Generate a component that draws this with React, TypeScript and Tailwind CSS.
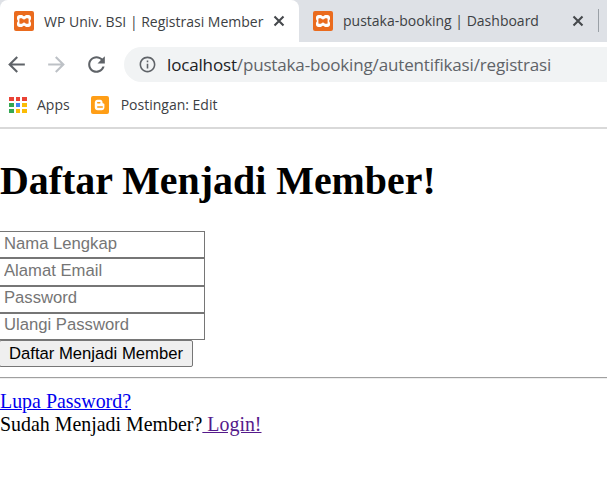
const serif = "font-['Liberation_Serif',serif]";
const sans = "font-['Liberation_Sans',Arial,sans-serif]";
const ui = "font-['Open_Sans','Noto_Sans',sans-serif]";

const fields = ['Nama Lengkap', 'Alamat Email', 'Password', 'Ulangi Password'];
const appColors = ['#ea4335', '#ea4335', '#ea4335', '#34a853', '#4285f4', '#fbbc05', '#34a853', '#fbbc05', '#fbbc05'];

function Xampp() {
  return (
    <svg width="20" height="20" viewBox="0 0 20 20" className="shrink-0">
      <rect width="20" height="20" rx="2" fill="#ea6b1e" />
      <path
        fillRule="evenodd"
        fill="#fff"
        d="M5.500 4h2.300c.9 0 1.200 1.200 2.200 1.200S11.300 4 12.200 4h2.300C16 4 17 5 17 6.500v1.200c0 1.100-.9 1.400-.9 2.300s.9 1.200.9 2.300v1.200c0 1.500-1 2.500-2.500 2.500h-2.300c-.9 0-1.200-1.200-2.200-1.200s-1.300 1.200-2.200 1.200H5.500C4 16 3 15 3 13.500v-1.200c0-1.100.9-1.400.9-2.300S3 8.800 3 7.700V6.500C3 5 4 4 5.500 4zM6.300 7.200c-.6 0-.9.300-.9.900v3.800c0 .6.300.9.900.9h1.400c.8 0 1-1.300 2.300-1.300s1.500 1.300 2.300 1.300h1.400c.6 0 .9-.3.900-.9V8.100c0-.6-.3-.9-.9-.9h-1.400c-.8 0-1 1.300-2.300 1.300S8.500 7.200 7.700 7.200z"
      />
    </svg>
  );
}

function CloseIcon() {
  return (
    <svg width="12" height="12" viewBox="0 0 12 12" className="shrink-0">
      <path d="M1.500 1.500l9 9M10.500 1.500l-9 9" stroke="#45484c" strokeWidth="2.100" fill="none" />
    </svg>
  );
}

function ArrowIcon({ flip, color }: { flip?: boolean; color: string }) {
  return (
    <svg width="25" height="25" viewBox="0 0 24 24" fill={color} className={flip ? 'shrink-0 -scale-x-100' : 'shrink-0'}>
      <path d="M20 11H7.830l5.590-5.590L12 4l-8 8 8 8 1.410-1.410L7.830 13H20v-2z" />
    </svg>
  );
}

function BloggerIcon() {
  return (
    <svg width="18" height="18" viewBox="0 0 18 18" className="shrink-0">
      <rect width="18" height="18" rx="2" fill="#ff9e16" />
      <path d="M6.500 3.800h2.700c1.300 0 2.300 1 2.300 2.300v.7c0 .5.400.7.900.7.700 0 1 .400 1 1v2.900c0 1.600-1.100 2.800-2.700 2.800H6.500c-1.500 0-2.700-1.200-2.700-2.700V6.500c0-1.500 1.200-2.700 2.700-2.700z" fill="#fff" />
      <rect x="6" y="6" width="3.500" height="1.500" rx=".7" fill="#ff9e16" />
      <rect x="6" y="10.300" width="6" height="1.500" rx=".7" fill="#ff9e16" />
    </svg>
  );
}

export default function App() {
  return (
    <div className="w-[607px] h-[499px] overflow-hidden bg-white">
      {/* Tabs */}
      <div className={`h-[42px] bg-[#dee1e6] flex ${ui}`}>
        <div className="w-[299px] h-[42px] bg-white rounded-t-[8px] flex items-center pl-[14px] pr-[14px]">
          <Xampp />
          <span className="ml-[10px] text-[14px] text-[#3c4043] whitespace-nowrap">WP Univ. BSI | Registrasi Member</span>
          <div className="ml-auto"><CloseIcon /></div>
        </div>
        <div className="flex-1 flex items-center pl-[14px] pb-[1px]">
          <Xampp />
          <span className="ml-[10px] text-[14px] text-[#3c4043] whitespace-nowrap">pustaka-booking | Dashboard</span>
          <div className="ml-auto"><CloseIcon /></div>
          <div className="ml-[14px] mr-[8px] w-px h-[23px] bg-[#9aa0a6]" />
        </div>
      </div>
      {/* Toolbar */}
      <div className="h-[42px] flex items-start pt-[5px]">
        <div className="w-[124px] h-[35px] flex items-center pl-[4px] gap-[15px]">
          <ArrowIcon color="#5f6368" />
          <ArrowIcon flip color="#bdc1c6" />
          <svg width="25" height="25" viewBox="0 0 24 24" fill="#5f6368" className="shrink-0">
            <path d="M17.650 6.350C16.200 4.900 14.210 4 12 4c-4.420 0-7.990 3.580-7.990 8s3.570 8 7.990 8c3.730 0 6.840-2.550 7.730-6h-2.080c-.82 2.330-3.040 4-5.650 4-3.310 0-6-2.690-6-6s2.690-6 6-6c1.660 0 3.140.69 4.220 1.780L13 11h7V4l-2.350 2.350z" />
          </svg>
        </div>
        <div className={`flex-1 h-[35px] bg-[#f1f3f4] rounded-l-full flex items-center pl-[14px] ${ui}`}>
          <svg width="19" height="19" viewBox="0 0 24 24" fill="#5f6368" className="shrink-0">
            <path d="M11 7h2v2h-2zm0 4h2v6h-2zm1-9C6.480 2 2 6.480 2 12s4.480 10 10 10 10-4.480 10-10S17.520 2 12 2zm0 18c-4.410 0-8-3.590-8-8s3.590-8 8-8 8 3.590 8 8-3.590 8-8 8z" />
          </svg>
          <span className="ml-[10px] text-[17px] text-[#5f6368] whitespace-nowrap tracking-[-0.155px]"><span className="text-[#202124]">localhost</span>/pustaka-booking/autentifikasi/registrasi</span>
        </div>
      </div>
      {/* Bookmarks */}
      <div className={`h-[45px] border-b-2 border-[#d9d9d9] flex items-center pl-[9px] pb-[2px] text-[14px] text-[#3c4043] ${ui}`}>
        <div className="grid grid-cols-3 gap-[1.500px] w-[18px] mt-[1px]">
          {appColors.map((c, i) => <div key={i} className="w-[4.500px] h-[4.500px]" style={{ background: c }} />)}
        </div>
        <span className="ml-[10px]">Apps</span>
        <div className="ml-[21px] mt-[1px]"><BloggerIcon /></div>
        <span className="ml-[12px]">Postingan: Edit</span>
      </div>
      {/* Page */}
      <div className={`${serif} text-black`}>
        <h1 className="text-[39.900px] font-bold leading-[46px] mt-[29px] mb-[27px]">Daftar Menjadi Member!</h1>
        <form className="flex flex-col items-start">
          {fields.map((f) => (
            <input
              key={f}
              readOnly
              placeholder={f}
              className={`${sans} block -ml-px w-[206px] h-[27.250px] border border-[#767676] px-[4px] pb-[2px] text-[16.670px] outline-none placeholder:text-[#757575]`}
            />
          ))}
          <button type="button" className={`${sans} -ml-px w-[194px] h-[27px] bg-[#efefef] border border-[#767676] rounded-[2px] pb-[2px] text-[16.670px] text-black whitespace-nowrap`}>Daftar Menjadi Member</button>
        </form>
        <hr className="mt-[10px] border-t border-b-0 border-[#a0a0a0] shadow-[0_1px_0_#eeeeee]" />
        <div className="mt-[12px] text-[19.920px] leading-[23px]">
          <div><a href="#" className="text-[#0000ee] underline">Lupa Password?</a></div>
          <div>Sudah Menjadi Member?<a href="#" className="text-[#551a8b] underline"> Login!</a></div>
        </div>
      </div>
    </div>
  );
}
